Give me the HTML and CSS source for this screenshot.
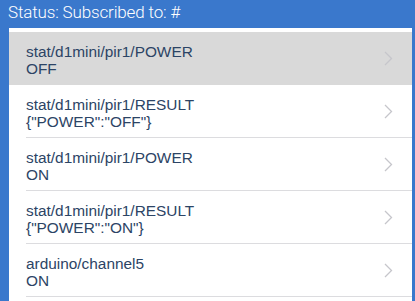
FILE: index.html
```html
<!DOCTYPE html>
<html>
<head>
<meta charset="utf-8">
<link rel="stylesheet" href="styles.css">
</head>
<body>
<div class="app">
  <div class="status">Status: Subscribed to: #</div>
  <div class="panel">
    <ul class="list">
      <li class="row selected">
        <div class="text"><div>stat/d1mini/pir1/POWER</div><div>OFF</div></div>
        <svg class="chev" width="9" height="15" viewBox="0 0 9 15"><path d="M1 1 L7.5 7.5 L1 14" fill="none" stroke="#c6c6cb" stroke-width="1.3"/></svg>
      </li>
      <li class="row">
        <div class="text"><div>stat/d1mini/pir1/RESULT</div><div>{"POWER":"OFF"}</div></div>
        <svg class="chev" width="9" height="15" viewBox="0 0 9 15"><path d="M1 1 L7.5 7.5 L1 14" fill="none" stroke="#c6c6cb" stroke-width="1.3"/></svg>
      </li>
      <li class="row">
        <div class="text"><div>stat/d1mini/pir1/POWER</div><div>ON</div></div>
        <svg class="chev" width="9" height="15" viewBox="0 0 9 15"><path d="M1 1 L7.5 7.5 L1 14" fill="none" stroke="#c6c6cb" stroke-width="1.3"/></svg>
      </li>
      <li class="row">
        <div class="text"><div>stat/d1mini/pir1/RESULT</div><div>{"POWER":"ON"}</div></div>
        <svg class="chev" width="9" height="15" viewBox="0 0 9 15"><path d="M1 1 L7.5 7.5 L1 14" fill="none" stroke="#c6c6cb" stroke-width="1.3"/></svg>
      </li>
      <li class="row">
        <div class="text"><div>arduino/channel5</div><div>ON</div></div>
        <svg class="chev" width="9" height="15" viewBox="0 0 9 15"><path d="M1 1 L7.5 7.5 L1 14" fill="none" stroke="#c6c6cb" stroke-width="1.3"/></svg>
      </li>
    </ul>
  </div>
</div>
</body>
</html>
```
FILE: styles.css
```css
html, body {
  margin: 0;
  padding: 0;
  background: #3a78cc;
}
.app {
  width: 415px;
  height: 301px;
  overflow: hidden;
  background: #3a78cc;
  font-family: "Liberation Sans", Arial, sans-serif;
}
.status {
  height: 28px;
  padding-left: 8px;
  line-height: 25px;
  font-family: Roboto, "Liberation Sans", sans-serif;
  font-size: 17px;
  letter-spacing: -0.15px;
  color: #ffffff;
  font-weight: 300;
}
.panel {
  margin-left: 9px;
  margin-right: 3px;
  background: #ffffff;
  height: 273px;
  padding-top: 4px;
  box-sizing: border-box;
}
.list {
  list-style: none;
  margin: 0;
  padding: 0;
}
.row {
  height: 53px;
  display: flex;
  align-items: center;
  justify-content: space-between;
  padding-left: 17px;
  padding-right: 19px;
  padding-top: 3px;
  box-sizing: border-box;
  position: relative;
}
.row::after {
  content: "";
  position: absolute;
  left: 17px;
  right: 0;
  bottom: 0;
  height: 1px;
  background: #dcdcdf;
}
.row.selected {
  background: #d9d9d9;
}
.row.selected::after {
  display: none;
}
.text {
  font-size: 15.4px;
  line-height: 17px;
  color: #2c4465;
}
.chev {
  display: block;
  margin-top: -3px;
}
```
